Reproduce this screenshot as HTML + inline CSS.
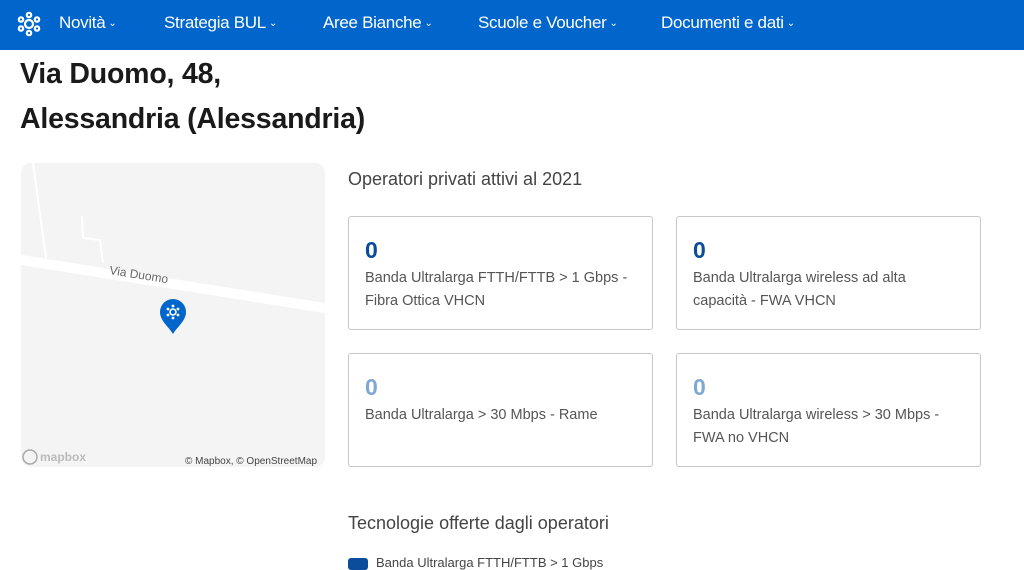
<!DOCTYPE html>
<html><head><meta charset="utf-8"><style>
*{margin:0;padding:0;box-sizing:border-box}
body{width:1024px;height:566px;overflow:hidden;background:#fff;font-family:"Liberation Sans",sans-serif;color:#1a1a1a;position:relative}
.nav{position:absolute;left:0;top:0;width:1024px;height:50px;background:#0066cc;color:#fff}
.nav span{position:absolute;top:13px;font-size:17px;letter-spacing:-0.3px}
.nav small{font-size:10px;margin-left:3px;vertical-align:2px}
h1{position:absolute;left:20px;font-size:28.5px;font-weight:bold;color:#1a1a1a;letter-spacing:-0.2px}
.map{position:absolute;left:21px;top:163px;width:304px;height:304px;background:#f4f4f4;border-radius:10px;overflow:hidden}
.sec{position:absolute;left:348px;font-size:18px;color:#444;font-weight:300}
.card{position:absolute;width:305px;height:114px;border:1px solid #c5c7c9;border-radius:3px;background:#fff}
.card b{position:absolute;left:16px;top:20px;font-size:23px;color:#0b4c9b}
.card b.l{color:#7fa8d4}
.card p{position:absolute;left:16px;top:50px;font-size:14.5px;line-height:23px;color:#555}
</style></head><body>
<div class="nav">
<svg style="position:absolute;left:16px;top:11px" width="26" height="26" viewBox="0 0 26 26" fill="none" stroke="#fff" stroke-width="2.2"><circle cx="13" cy="13" r="4"/><circle cx="13" cy="4" r="2.2"/><circle cx="13" cy="22" r="2.2"/><circle cx="5" cy="8.5" r="2.2"/><circle cx="21" cy="8.5" r="2.2"/><circle cx="5" cy="17.5" r="2.2"/><circle cx="21" cy="17.5" r="2.2"/></svg>
<span style="left:59px">Novità<small>⌄</small></span>
<span style="left:164px">Strategia BUL<small>⌄</small></span>
<span style="left:323px">Aree Bianche<small>⌄</small></span>
<span style="left:478px">Scuole e Voucher<small>⌄</small></span>
<span style="left:661px">Documenti e dati<small>⌄</small></span>
</div>
<h1 style="top:58px">Via Duomo, 48,</h1>
<h1 style="top:103px">Alessandria (Alessandria)</h1>
<div class="map">
<svg width="304" height="304" style="position:absolute;left:0;top:0">
<path d="M0 97 L304 145" stroke="#fff" stroke-width="10"/>
<path d="M12 0 L25 95" stroke="#fff" stroke-width="2"/>
<path d="M61 53 L62 75 L79 77 L82 100" stroke="#fff" stroke-width="2" fill="none"/>
<text x="88" y="111" font-size="12" fill="#666" font-family="Liberation Sans" transform="rotate(9 88 111)">Via Duomo</text>
<path d="M152 136 a13 13 0 0 1 13 13 c0 9 -9 15 -13 22 c-4 -7 -13 -13 -13 -22 a13 13 0 0 1 13 -13z" fill="#0066cc"/>
<circle cx="152" cy="149" r="3" fill="none" stroke="#fff" stroke-width="1.6"/>
<g fill="#fff"><circle cx="152" cy="143" r="1.4"/><circle cx="152" cy="155" r="1.4"/><circle cx="147" cy="146" r="1.4"/><circle cx="157" cy="146" r="1.4"/><circle cx="147" cy="152" r="1.4"/><circle cx="157" cy="152" r="1.4"/></g>
<circle cx="9" cy="294" r="7" fill="none" stroke="#aaa" stroke-width="1.5"/>
<text x="19" y="298" font-size="12" font-weight="bold" fill="#bbb" font-family="Liberation Sans">mapbox</text>
<text x="164" y="301" font-size="10" fill="#444" font-family="Liberation Sans">© Mapbox, © OpenStreetMap</text>
</svg></div>
<div class="sec" style="top:169px">Operatori privati attivi al 2021</div>
<div class="card" style="left:348px;top:216px"><b>0</b><p>Banda Ultralarga FTTH/FTTB &gt; 1 Gbps -<br>Fibra Ottica VHCN</p></div>
<div class="card" style="left:676px;top:216px"><b>0</b><p>Banda Ultralarga wireless ad alta<br>capacità - FWA VHCN</p></div>
<div class="card" style="left:348px;top:353px"><b class="l">0</b><p>Banda Ultralarga &gt; 30 Mbps - Rame</p></div>
<div class="card" style="left:676px;top:353px"><b class="l">0</b><p>Banda Ultralarga wireless &gt; 30 Mbps -<br>FWA no VHCN</p></div>
<div class="sec" style="top:513px">Tecnologie offerte dagli operatori</div>
<div style="position:absolute;left:348px;top:558px;width:20px;height:12px;background:#0b4c9b;border-radius:3px"></div>
<div style="position:absolute;left:376px;top:555px;font-size:13px;color:#444">Banda Ultralarga FTTH/FTTB &gt; 1 Gbps</div>
</body></html>
